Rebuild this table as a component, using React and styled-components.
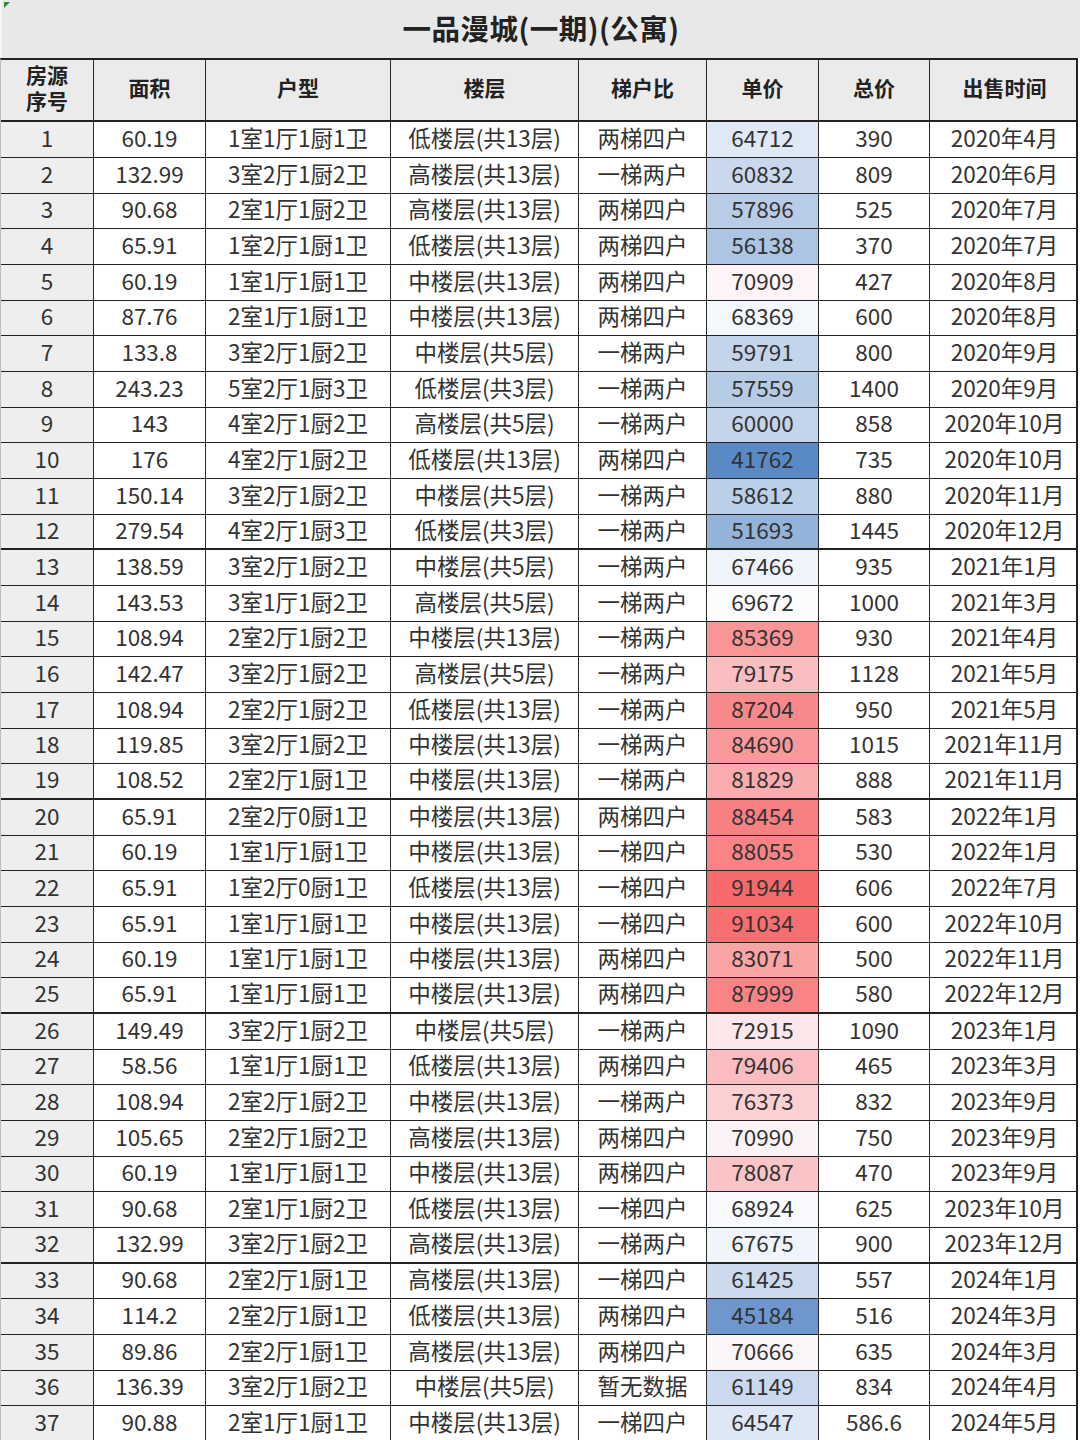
import React from 'react';
import styled, { createGlobalStyle } from 'styled-components';

const GlobalStyle = createGlobalStyle`
  html, body {
    margin: 0;
    padding: 0;
    background: #ffffff;
  }
  body {
    font-family: "Noto Sans CJK SC", "Noto Sans", sans-serif;
    color: #333;
  }
`;

const COLS = '93px 112px 185px 188px 128px 112px 111px 149px';

const rows = [
  [1, '60.19', '1室1厅1厨1卫', '低楼层(共13层)', '两梯四户', 64712, '390', '2020年4月'],
  [2, '132.99', '3室2厅1厨2卫', '高楼层(共13层)', '一梯两户', 60832, '809', '2020年6月'],
  [3, '90.68', '2室1厅1厨2卫', '高楼层(共13层)', '两梯四户', 57896, '525', '2020年7月'],
  [4, '65.91', '1室2厅1厨1卫', '低楼层(共13层)', '两梯四户', 56138, '370', '2020年7月'],
  [5, '60.19', '1室1厅1厨1卫', '中楼层(共13层)', '两梯四户', 70909, '427', '2020年8月'],
  [6, '87.76', '2室1厅1厨1卫', '中楼层(共13层)', '两梯四户', 68369, '600', '2020年8月'],
  [7, '133.8', '3室2厅1厨2卫', '中楼层(共5层)', '一梯两户', 59791, '800', '2020年9月'],
  [8, '243.23', '5室2厅1厨3卫', '低楼层(共3层)', '一梯两户', 57559, '1400', '2020年9月'],
  [9, '143', '4室2厅1厨2卫', '高楼层(共5层)', '一梯两户', 60000, '858', '2020年10月'],
  [10, '176', '4室2厅1厨2卫', '低楼层(共13层)', '两梯四户', 41762, '735', '2020年10月'],
  [11, '150.14', '3室2厅1厨2卫', '中楼层(共5层)', '一梯两户', 58612, '880', '2020年11月'],
  [12, '279.54', '4室2厅1厨3卫', '低楼层(共3层)', '一梯两户', 51693, '1445', '2020年12月'],
  [13, '138.59', '3室2厅1厨2卫', '中楼层(共5层)', '一梯两户', 67466, '935', '2021年1月'],
  [14, '143.53', '3室1厅1厨2卫', '高楼层(共5层)', '一梯两户', 69672, '1000', '2021年3月'],
  [15, '108.94', '2室2厅1厨2卫', '中楼层(共13层)', '一梯两户', 85369, '930', '2021年4月'],
  [16, '142.47', '3室2厅1厨2卫', '高楼层(共5层)', '一梯两户', 79175, '1128', '2021年5月'],
  [17, '108.94', '2室2厅1厨2卫', '低楼层(共13层)', '一梯两户', 87204, '950', '2021年5月'],
  [18, '119.85', '3室2厅1厨2卫', '中楼层(共13层)', '一梯两户', 84690, '1015', '2021年11月'],
  [19, '108.52', '2室2厅1厨1卫', '中楼层(共13层)', '一梯两户', 81829, '888', '2021年11月'],
  [20, '65.91', '2室2厅0厨1卫', '中楼层(共13层)', '两梯四户', 88454, '583', '2022年1月'],
  [21, '60.19', '1室1厅1厨1卫', '中楼层(共13层)', '一梯四户', 88055, '530', '2022年1月'],
  [22, '65.91', '1室2厅0厨1卫', '低楼层(共13层)', '一梯四户', 91944, '606', '2022年7月'],
  [23, '65.91', '1室1厅1厨1卫', '中楼层(共13层)', '一梯四户', 91034, '600', '2022年10月'],
  [24, '60.19', '1室1厅1厨1卫', '中楼层(共13层)', '两梯四户', 83071, '500', '2022年11月'],
  [25, '65.91', '1室1厅1厨1卫', '中楼层(共13层)', '两梯四户', 87999, '580', '2022年12月'],
  [26, '149.49', '3室2厅1厨2卫', '中楼层(共5层)', '一梯两户', 72915, '1090', '2023年1月'],
  [27, '58.56', '1室1厅1厨1卫', '低楼层(共13层)', '两梯四户', 79406, '465', '2023年3月'],
  [28, '108.94', '2室2厅1厨2卫', '中楼层(共13层)', '一梯两户', 76373, '832', '2023年9月'],
  [29, '105.65', '2室2厅1厨2卫', '高楼层(共13层)', '两梯四户', 70990, '750', '2023年9月'],
  [30, '60.19', '1室1厅1厨1卫', '中楼层(共13层)', '两梯四户', 78087, '470', '2023年9月'],
  [31, '90.68', '2室1厅1厨2卫', '低楼层(共13层)', '一梯四户', 68924, '625', '2023年10月'],
  [32, '132.99', '3室2厅1厨2卫', '高楼层(共13层)', '一梯两户', 67675, '900', '2023年12月'],
  [33, '90.68', '2室2厅1厨1卫', '高楼层(共13层)', '一梯四户', 61425, '557', '2024年1月'],
  [34, '114.2', '2室2厅1厨1卫', '低楼层(共13层)', '两梯四户', 45184, '516', '2024年3月'],
  [35, '89.86', '2室2厅1厨1卫', '高楼层(共13层)', '两梯四户', 70666, '635', '2024年3月'],
  [36, '136.39', '3室2厅1厨2卫', '中楼层(共5层)', '暂无数据', 61149, '834', '2024年4月'],
  [37, '90.88', '2室1厅1厨1卫', '中楼层(共13层)', '一梯四户', 64547, '586.6', '2024年5月'],
];

// year boundaries get a heavier rule below
const thickAfter = [12, 19, 25, 32];

const headers = ['房源\n序号', '面积', '户型', '楼层', '梯户比', '单价', '总价', '出售时间'];

// excel-like 3 colour scale: blue -> white -> red, midpoint = median
const prices = rows.map((r) => r[5]);
const sorted = [...prices].sort((a, b) => a - b);
const minP = sorted[0];
const maxP = sorted[sorted.length - 1];
const midP = sorted[Math.floor(sorted.length / 2)];

const BLUE = [90, 138, 198];
const WHITE = [252, 252, 255];
const RED = [248, 105, 107];

const mix = (a, b, t) => a.map((v, i) => Math.round(v + (b[i] - v) * t));

const scaleColor = (v) => {
  let c;
  if (v <= midP) c = mix(BLUE, WHITE, (v - minP) / (midP - minP));
  else c = mix(WHITE, RED, (v - midP) / (maxP - midP));
  return `rgb(${c[0]}, ${c[1]}, ${c[2]})`;
};

const Page = styled.div`
  width: 1080px;
  background: #fff;
`;

const Title = styled.div`
  position: relative;
  height: 58px;
  padding-bottom: 4px;
  display: flex;
  align-items: center;
  justify-content: center;
  background: #e8e8e8;
  border-left: 2px solid #f6f6f6;
  box-sizing: border-box;
  font-size: 28.5px;
  font-weight: 700;
  color: #222;
  letter-spacing: 0.5px;
`;

const Marker = styled.span`
  position: absolute;
  top: 2px;
  left: 2px;
  width: 0;
  height: 0;
  border-top: 6px solid #2e8b3a;
  border-right: 6px solid transparent;
`;

const Sheet = styled.div`
  width: 1078px;
  border-top: 2px solid #222;
  border-right: 2px solid #222;
  border-left: 1px solid #bbb;
  box-sizing: border-box;
`;

const Row = styled.div`
  display: grid;
  grid-template-columns: ${COLS};
  height: ${(p) => (p.$head ? '62px' : p.$short ? '35px' : '36px')};
  box-sizing: border-box;
  border-bottom: ${(p) => (p.$thick ? '2px' : '1px')} solid #222;
  background: ${(p) => (p.$head ? '#ebebeb' : '#fff')};
`;

const Cell = styled.div`
  display: flex;
  align-items: center;
  justify-content: center;
  min-height: 0;
  text-align: center;
  padding-bottom: 5px;
  box-sizing: border-box;
  border-right: 1px solid #2a2a2a;
  font-size: 22.5px;
  line-height: 1;
  color: #333;
  white-space: nowrap;
  background: ${(p) => p.$bg || 'transparent'};

  &:last-child {
    border-right: none;
  }
`;

const IndexCell = styled(Cell)`
  background: #eeeeee;
`;

const HeadCell = styled(Cell)`
  font-size: 21px;
  font-weight: 700;
  color: #222;
  line-height: 1.2;
  white-space: pre-line;
`;

export default function App() {
  return (
    <Page>
      <GlobalStyle />
      <Title>
        <Marker />
        一品漫城(一期)(公寓)
      </Title>
      <Sheet>
        <Row $head $thick>
          {headers.map((h) => (
            <HeadCell key={h}>{h}</HeadCell>
          ))}
        </Row>
        {rows.map((r, i) => (
          <Row key={r[0]} $short={i % 3 === 2} $thick={thickAfter.includes(r[0])}>
            <IndexCell>{r[0]}</IndexCell>
            <Cell>{r[1]}</Cell>
            <Cell>{r[2]}</Cell>
            <Cell>{r[3]}</Cell>
            <Cell>{r[4]}</Cell>
            <Cell $bg={scaleColor(r[5])}>{r[5]}</Cell>
            <Cell>{r[6]}</Cell>
            <Cell>{r[7]}</Cell>
          </Row>
        ))}
      </Sheet>
    </Page>
  );
}
